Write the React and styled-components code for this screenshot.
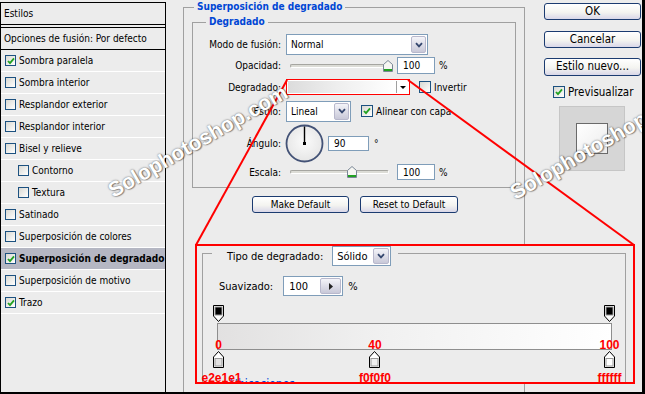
import React from "react";
import styled, { createGlobalStyle } from "styled-components";

const FONT = `"DejaVu Sans Condensed", "Liberation Sans", Arial, sans-serif`;

const GlobalStyle = createGlobalStyle`
  * { box-sizing: border-box; }
  html, body { margin: 0; padding: 0; background: #ececec; }
  body { font-family: ${FONT}; font-size: 10px; color: #000; }
`;

const Page = styled.div`
  position: relative;
  width: 645px;
  height: 394px;
  display: flex;
  align-items: flex-start;
  overflow: hidden;
  background: #ececec;
  border-right: 3px solid #000;
  border-bottom: 2px solid #000;
`;

/* ---------- left list of effects ---------- */
const StylesPanel = styled.div`
  flex: none;
  width: 166px;
  height: 390px;
  margin-top: 2px;
  border: 1px solid #000;
  border-bottom: none;
`;

const PanelHeader = styled.div`
  height: 22px;
  display: flex;
  align-items: center;
  padding-left: 3px;
  border-bottom: 1px solid #000;
  margin-bottom: 2px;
`;

const BlendRow = styled.div`
  height: 23px;
  display: flex;
  align-items: center;
  padding-left: 3px;
  border-top: 1px solid #000;
  border-bottom: 1px solid #000;
`;

const EffectRow = styled.div`
  height: 22px;
  display: flex;
  align-items: center;
  gap: 3px;
  padding-left: ${(p) => (p.$sub ? 17 : 4)}px;
  border-bottom: 1px solid #fff;
  background: ${(p) => (p.$active ? "#b5b7c3" : "transparent")};
  font-weight: ${(p) => (p.$active ? "bold" : "normal")};
`;

const Box = styled.span`
  flex: none;
  width: ${(p) => p.$size}px;
  height: ${(p) => p.$size}px;
  border: 1px solid #1c5180;
  background: linear-gradient(135deg, #d8d8d2, #ffffff);
  display: inline-flex;
  align-items: center;
  justify-content: center;
`;

const CheckBox = ({ checked, size = 12 }) => (
  <Box $size={size}>
    {checked && (
      <svg width="8" height="8" viewBox="0 0 8 8">
        <path d="M1 4 L3 6.2 L7 1.4" fill="none" stroke="#21a121" strokeWidth="1.8" />
      </svg>
    )}
  </Box>
);

/* ---------- middle: gradient overlay settings ---------- */
const Middle = styled.div`
  flex: none;
  width: 364px;
  padding: 7px 0 0 17px;
`;

const GroupBox = styled.div`
  width: ${(p) => p.$w}px;
  height: ${(p) => p.$h}px;
  margin: ${(p) => p.$m || 0};
  border: 1px solid #a0a0a0;
  ${(p) => p.$open && "border-bottom: none;"}
`;

const Legend = styled.div`
  width: fit-content;
  margin: -8px 0 0 ${(p) => p.$indent}px;
  padding: 0 3px;
  line-height: 14px;
  background: #ececec;
  color: #0046d5;
  font-weight: bold;
`;

const Fields = styled.div`
  margin-top: 5px;
  display: flex;
  flex-direction: column;
`;

const Field = styled.div`
  height: ${(p) => p.$h}px;
  display: flex;
  align-items: center;
`;

const FieldLabel = styled.span`
  flex: none;
  width: 88px;
  margin-right: 5px;
  text-align: right;
`;

const Select = styled.div`
  flex: none;
  width: ${(p) => p.$w}px;
  height: ${(p) => p.$h}px;
  display: flex;
  padding: 1px;
  border: 1px solid #7f9db9;
  background: #fff;
`;

const SelectValue = styled.span`
  flex: 1;
  display: flex;
  align-items: center;
  padding-left: 3px;
`;

const DropButton = styled.span`
  flex: none;
  width: ${(p) => p.$w || 15}px;
  display: flex;
  align-items: center;
  justify-content: center;
  border: 1px solid #b8b8cc;
  border-radius: 2px;
  background: linear-gradient(#f4f4f9, #c8c8d8);
`;

const Chevron = () => (
  <svg width="8" height="6" viewBox="0 0 8 6">
    <path d="M1 1.2 L4 4.4 L7 1.2" fill="none" stroke="#34466e" strokeWidth="1.8" />
  </svg>
);

const SliderWrap = styled.div`
  flex: none;
  position: relative;
  width: 107px;
  height: 12px;
  margin-left: 4px;
  display: flex;
  align-items: center;
`;

const Track = styled.span`
  width: ${(p) => p.$w}px;
  height: 4px;
  border-radius: 2px;
  border: 1px solid #a5a5a0;
  border-bottom-color: #fff;
  border-right-color: #fff;
  background: #dcdcd6;
`;

const Thumb = styled.svg`
  position: absolute;
  top: 0;
`;

const Slider = ({ width, value, min, max }) => {
  const left = ((value - min) / (max - min)) * (width - 10);
  return (
    <SliderWrap>
      <Track $w={width} />
      <Thumb width="10" height="12" viewBox="0 0 10 12" style={{ left }}>
        <path d="M0.5 4.5 L5 0.5 L9.5 4.5 V11.5 H0.5 Z" fill="#f6f6f2" stroke="#7a8796" />
        <rect x="1" y="9" width="8" height="2" fill="#21a121" />
      </Thumb>
    </SliderWrap>
  );
};

const NumBox = styled.div`
  flex: none;
  width: ${(p) => p.$w}px;
  height: ${(p) => p.$h}px;
  margin-left: ${(p) => p.$ml || 0}px;
  display: flex;
  align-items: center;
  padding-left: 5px;
  border: 1px solid #7f9db9;
  background: #fff;
`;

const Unit = styled.span`
  margin-left: ${(p) => p.$ml || 4}px;
`;

const GradientPick = styled.div`
  flex: none;
  width: 124px;
  height: 16px;
  display: flex;
  padding: 1px;
  border: 1px solid #f00;
  background: #fff;
`;

const GradientFill = styled.span`
  flex: 1;
  background: linear-gradient(90deg, #dcdcdc, #eeeeee 45%, #ffffff);
`;

const PickArrow = styled.span`
  flex: none;
  width: 12px;
  display: flex;
  align-items: center;
  justify-content: center;
  border-left: 1px solid #a0a0a0;
  &::after {
    content: "";
    border-left: 3px solid transparent;
    border-right: 3px solid transparent;
    border-top: 3px solid #000;
  }
`;

const CheckLabel = styled.label`
  display: flex;
  align-items: center;
  gap: 3px;
  margin-left: ${(p) => p.$ml || 0}px;
`;

const Dial = () => (
  <svg width="39" height="39" viewBox="0 0 39 39" style={{ marginLeft: -1, flex: "none" }}>
    <defs>
      <radialGradient id="dialFill" cx="50%" cy="45%" r="60%">
        <stop offset="0%" stopColor="#fbfbfb" />
        <stop offset="100%" stopColor="#e4e4e4" />
      </radialGradient>
    </defs>
    <circle cx="19.5" cy="19.5" r="18" fill="url(#dialFill)" stroke="#435276" strokeWidth="1.8" />
    <line x1="19.5" y1="19.5" x2="19.5" y2="2.5" stroke="#000" strokeWidth="1.4" />
    <rect x="18" y="18" width="3" height="3" fill="#000" />
  </svg>
);

const ActionRow = styled.div`
  display: flex;
  gap: 11px;
  margin: 8px 0 0 68px;
`;

const XPButton = styled.button`
  flex: none;
  width: ${(p) => p.$w}px;
  height: ${(p) => p.$h || 17}px;
  margin-bottom: ${(p) => p.$mb || 0}px;
  padding: 0;
  border: 1px solid #1b3b70;
  border-radius: 3px;
  background: linear-gradient(#ffffff 0%, #f4f4f0 55%, #d9d7e8 100%);
  font-family: ${FONT};
  font-size: ${(p) => p.$fs || 10}px;
  color: #000;
  line-height: 1;
`;

/* ---------- right column ---------- */
const Side = styled.div`
  flex: none;
  width: 112px;
  padding: 3px 0 0 14px;
  display: flex;
  flex-direction: column;
  font-size: 11.5px;
`;

const PreviewCheck = styled(CheckLabel)`
  height: 12px;
  margin: 10px 0 0 9px;
`;

const PreviewBox = styled.div`
  width: 66px;
  height: 65px;
  margin: 8px 0 0 15px;
  display: flex;
  align-items: center;
  justify-content: center;
  background: #d6d6d6;
  border: 1px solid #c6c6c6;
`;

const PreviewSwatch = styled.span`
  width: 32px;
  height: 31px;
  border: 1px solid #6a6a6a;
  background: linear-gradient(135deg, #ffffff, #ececec);
`;

/* ---------- zoomed gradient editor inset ---------- */
const Inset = styled.div`
  position: absolute;
  left: 195px;
  top: 244px;
  width: 440px;
  height: 140px;
  border: 2px solid #f00;
  background: #ececec;
  overflow: hidden;
  font-size: 11px;
`;

const EditorLegend = styled.div`
  width: fit-content;
  height: 20px;
  margin: -8px 0 0 9px;
  padding: 0 7px 0 15px;
  display: flex;
  align-items: center;
  gap: 9px;
  background: #ececec;
`;

const SmoothRow = styled.div`
  height: 20px;
  margin-top: 10px;
  padding-left: 16px;
  display: flex;
  align-items: center;
`;

const Stepper = styled.span`
  flex: none;
  width: 21px;
  height: 100%;
  margin-left: auto;
  display: flex;
  align-items: center;
  justify-content: center;
  border: 1px solid #b8b8cc;
  border-radius: 2px;
  background: linear-gradient(#f4f4f9, #c8c8d8);
`;

const GradientArea = styled.div`
  width: 395px;
  margin: 9px 0 0 14px;
`;

const StopTrack = styled.div`
  position: relative;
  height: 17px;
  margin-top: ${(p) => p.$mt || 0}px;
`;

const GradientBar = styled.div`
  height: 27px;
  margin-top: 1px;
  border: 1px solid #8e8e8e;
  background: linear-gradient(90deg, #e2e1e1 0%, #f0f0f0 40%, #ffffff 100%);
`;

const Stop = styled.div`
  position: absolute;
  top: 0;
  width: 11px;
  height: 17px;
`;

const RedNote = styled.span`
  position: absolute;
  left: 50%;
  top: ${(p) => p.$top}px;
  transform: translateX(calc(-50% + ${(p) => p.$shift || 0}px));
  font: bold 12px "Liberation Sans", Arial, sans-serif;
  line-height: 12px;
  color: #f00;
  white-space: nowrap;
`;

const NextGroup = styled.div`
  margin: 10px 0 0 27px;
  font-size: 12px;
  line-height: 12px;
  color: #0046d5;
`;

const Callout = styled.svg`
  position: absolute;
  left: 0;
  top: 0;
  pointer-events: none;
`;

const Watermark = styled.span`
  position: absolute;
  left: ${(p) => p.$x}px;
  top: ${(p) => p.$y}px;
  font: bold 21px "Liberation Sans", Arial, sans-serif;
  line-height: 24px;
  color: #fff;
  white-space: nowrap;
  text-shadow: 0 0 2px rgba(0, 0, 0, 0.6), 1px 1px 1px rgba(0, 0, 0, 0.35);
  transform: rotate(-30deg);
  transform-origin: 0 50%;
  pointer-events: none;
`;

const effects = [
  { name: "Sombra paralela", on: true },
  { name: "Sombra interior" },
  { name: "Resplandor exterior" },
  { name: "Resplandor interior" },
  { name: "Bisel y relieve" },
  { name: "Contorno", sub: true },
  { name: "Textura", sub: true },
  { name: "Satinado" },
  { name: "Superposición de colores" },
  { name: "Superposición de degradado", on: true, active: true },
  { name: "Superposición de motivo" },
  { name: "Trazo", on: true },
];

const opacityStops = [0, 100];
const colorStops = [
  { at: 0, color: "#e2e1e1", hex: "e2e1e1", shift: 3 },
  { at: 40, color: "#f0f0f0", hex: "f0f0f0" },
  { at: 100, color: "#ffffff", hex: "ffffff" },
];

const stopLeft = (at) => 1.5 + (at / 100) * 391 - 5.5;

const OpacityStop = () => (
  <svg width="11" height="17" viewBox="0 0 11 17">
    <path d="M0.5 0.5 H10.5 V11 L5.5 16.5 L0.5 11 Z" fill="#fff" stroke="#000" />
    <rect x="2" y="2" width="7" height="8" fill="#000" stroke="#9a9a9a" />
  </svg>
);

const ColorStop = ({ color }) => (
  <svg width="11" height="17" viewBox="0 0 11 17">
    <path d="M5.5 0.5 L10.5 6 V16.5 H0.5 V6 Z" fill="#fff" stroke="#000" />
    <rect x="2" y="7.5" width="7" height="7.5" fill={color} stroke="#9a9a9a" />
  </svg>
);

export default function App() {
  return (
    <>
      <GlobalStyle />
      <Page>
        <StylesPanel>
          <PanelHeader>Estilos</PanelHeader>
          <BlendRow>Opciones de fusión: Por defecto</BlendRow>
          {effects.map((e) => (
            <EffectRow key={e.name} $sub={e.sub} $active={e.active}>
              <CheckBox checked={e.on} size={11} />
              {e.name}
            </EffectRow>
          ))}
        </StylesPanel>

        <Middle>
          <GroupBox $w={342} $h={385} $open>
            <Legend $indent={10}>Superposición de degradado</Legend>
            <GroupBox $w={324} $h={166} $m="8px 0 0 8px">
              <Legend $indent={13}>Degradado</Legend>
              <Fields>
                <Field $h={21}>
                  <FieldLabel>Modo de fusión:</FieldLabel>
                  <Select $w={142} $h={21}>
                    <SelectValue>Normal</SelectValue>
                    <DropButton><Chevron /></DropButton>
                  </Select>
                </Field>
                <Field $h={21}>
                  <FieldLabel>Opacidad:</FieldLabel>
                  <Slider width={103} value={100} min={0} max={100} />
                  <NumBox $w={38} $h={17}>100</NumBox>
                  <Unit>%</Unit>
                </Field>
                <Field $h={22}>
                  <FieldLabel>Degradado:</FieldLabel>
                  <GradientPick>
                    <GradientFill />
                    <PickArrow />
                  </GradientPick>
                  <CheckLabel $ml={9}>
                    <CheckBox />
                    Invertir
                  </CheckLabel>
                </Field>
                <Field $h={26}>
                  <FieldLabel>Estilo:</FieldLabel>
                  <Select $w={65} $h={21}>
                    <SelectValue>Lineal</SelectValue>
                    <DropButton><Chevron /></DropButton>
                  </Select>
                  <CheckLabel $ml={10}>
                    <CheckBox checked />
                    Alinear con capa
                  </CheckLabel>
                </Field>
                <Field $h={38}>
                  <FieldLabel>Ángulo:</FieldLabel>
                  <Dial />
                  <NumBox $w={41} $h={15} $ml={4}>90</NumBox>
                  <Unit $ml={5}>°</Unit>
                </Field>
                <Field $h={20}>
                  <FieldLabel>Escala:</FieldLabel>
                  <Slider width={99} value={100} min={10} max={150} />
                  <NumBox $w={38} $h={16}>100</NumBox>
                  <Unit>%</Unit>
                </Field>
              </Fields>
            </GroupBox>
            <ActionRow>
              <XPButton $w={97}>Make Default</XPButton>
              <XPButton $w={98}>Reset to Default</XPButton>
            </ActionRow>
          </GroupBox>
        </Middle>

        <Side>
          <XPButton $w={97} $fs={11.5} $mb={11}>OK</XPButton>
          <XPButton $w={97} $fs={11.5} $mb={10}>Cancelar</XPButton>
          <XPButton $w={97} $h={18} $fs={11.5}>Estilo nuevo...</XPButton>
          <PreviewCheck>
            <CheckBox checked />
            Previsualizar
          </PreviewCheck>
          <PreviewBox>
            <PreviewSwatch />
          </PreviewBox>
        </Side>

        <Callout width="645" height="394" viewBox="0 0 645 394">
          <line x1="287" y1="80" x2="196" y2="245" stroke="#f00" strokeWidth="2" />
          <line x1="408" y1="80" x2="634" y2="245" stroke="#f00" strokeWidth="2" />
        </Callout>

        <Inset>
          <GroupBox $w={424} $h={140} $m="7px 0 0 5px" $open>
            <EditorLegend>
              Tipo de degradado:
              <Select $w={59} $h={20}>
                <SelectValue>Sólido</SelectValue>
                <DropButton $w={16}><Chevron /></DropButton>
              </Select>
            </EditorLegend>
            <SmoothRow>
              Suavizado:
              <NumBox $w={60} $h={20} $ml={10} style={{ padding: "1px 1px 1px 5px" }}>
                100
                <Stepper>
                  <svg width="4" height="7" viewBox="0 0 4 7">
                    <path d="M0 0 L4 3.5 L0 7 Z" fill="#222" />
                  </svg>
                </Stepper>
              </NumBox>
              <Unit $ml={5}>%</Unit>
            </SmoothRow>
            <GradientArea>
              <StopTrack>
                {opacityStops.map((at) => (
                  <Stop key={at} style={{ left: stopLeft(at) }}>
                    <OpacityStop />
                  </Stop>
                ))}
              </StopTrack>
              <GradientBar />
              <StopTrack $mt={1}>
                {colorStops.map((s) => (
                  <Stop key={s.at} style={{ left: stopLeft(s.at) }}>
                    <ColorStop color={s.color} />
                    <RedNote $top={-12}>{s.at}</RedNote>
                    <RedNote $top={21} $shift={s.shift}>{s.hex}</RedNote>
                  </Stop>
                ))}
              </StopTrack>
            </GradientArea>
            <NextGroup>Ubicaciones</NextGroup>
          </GroupBox>
        </Inset>

        <Watermark $x={110} $y={180}>Solophotoshop.com</Watermark>
        <Watermark $x={512} $y={182}>Solophotoshop.com</Watermark>
      </Page>
    </>
  );
}
